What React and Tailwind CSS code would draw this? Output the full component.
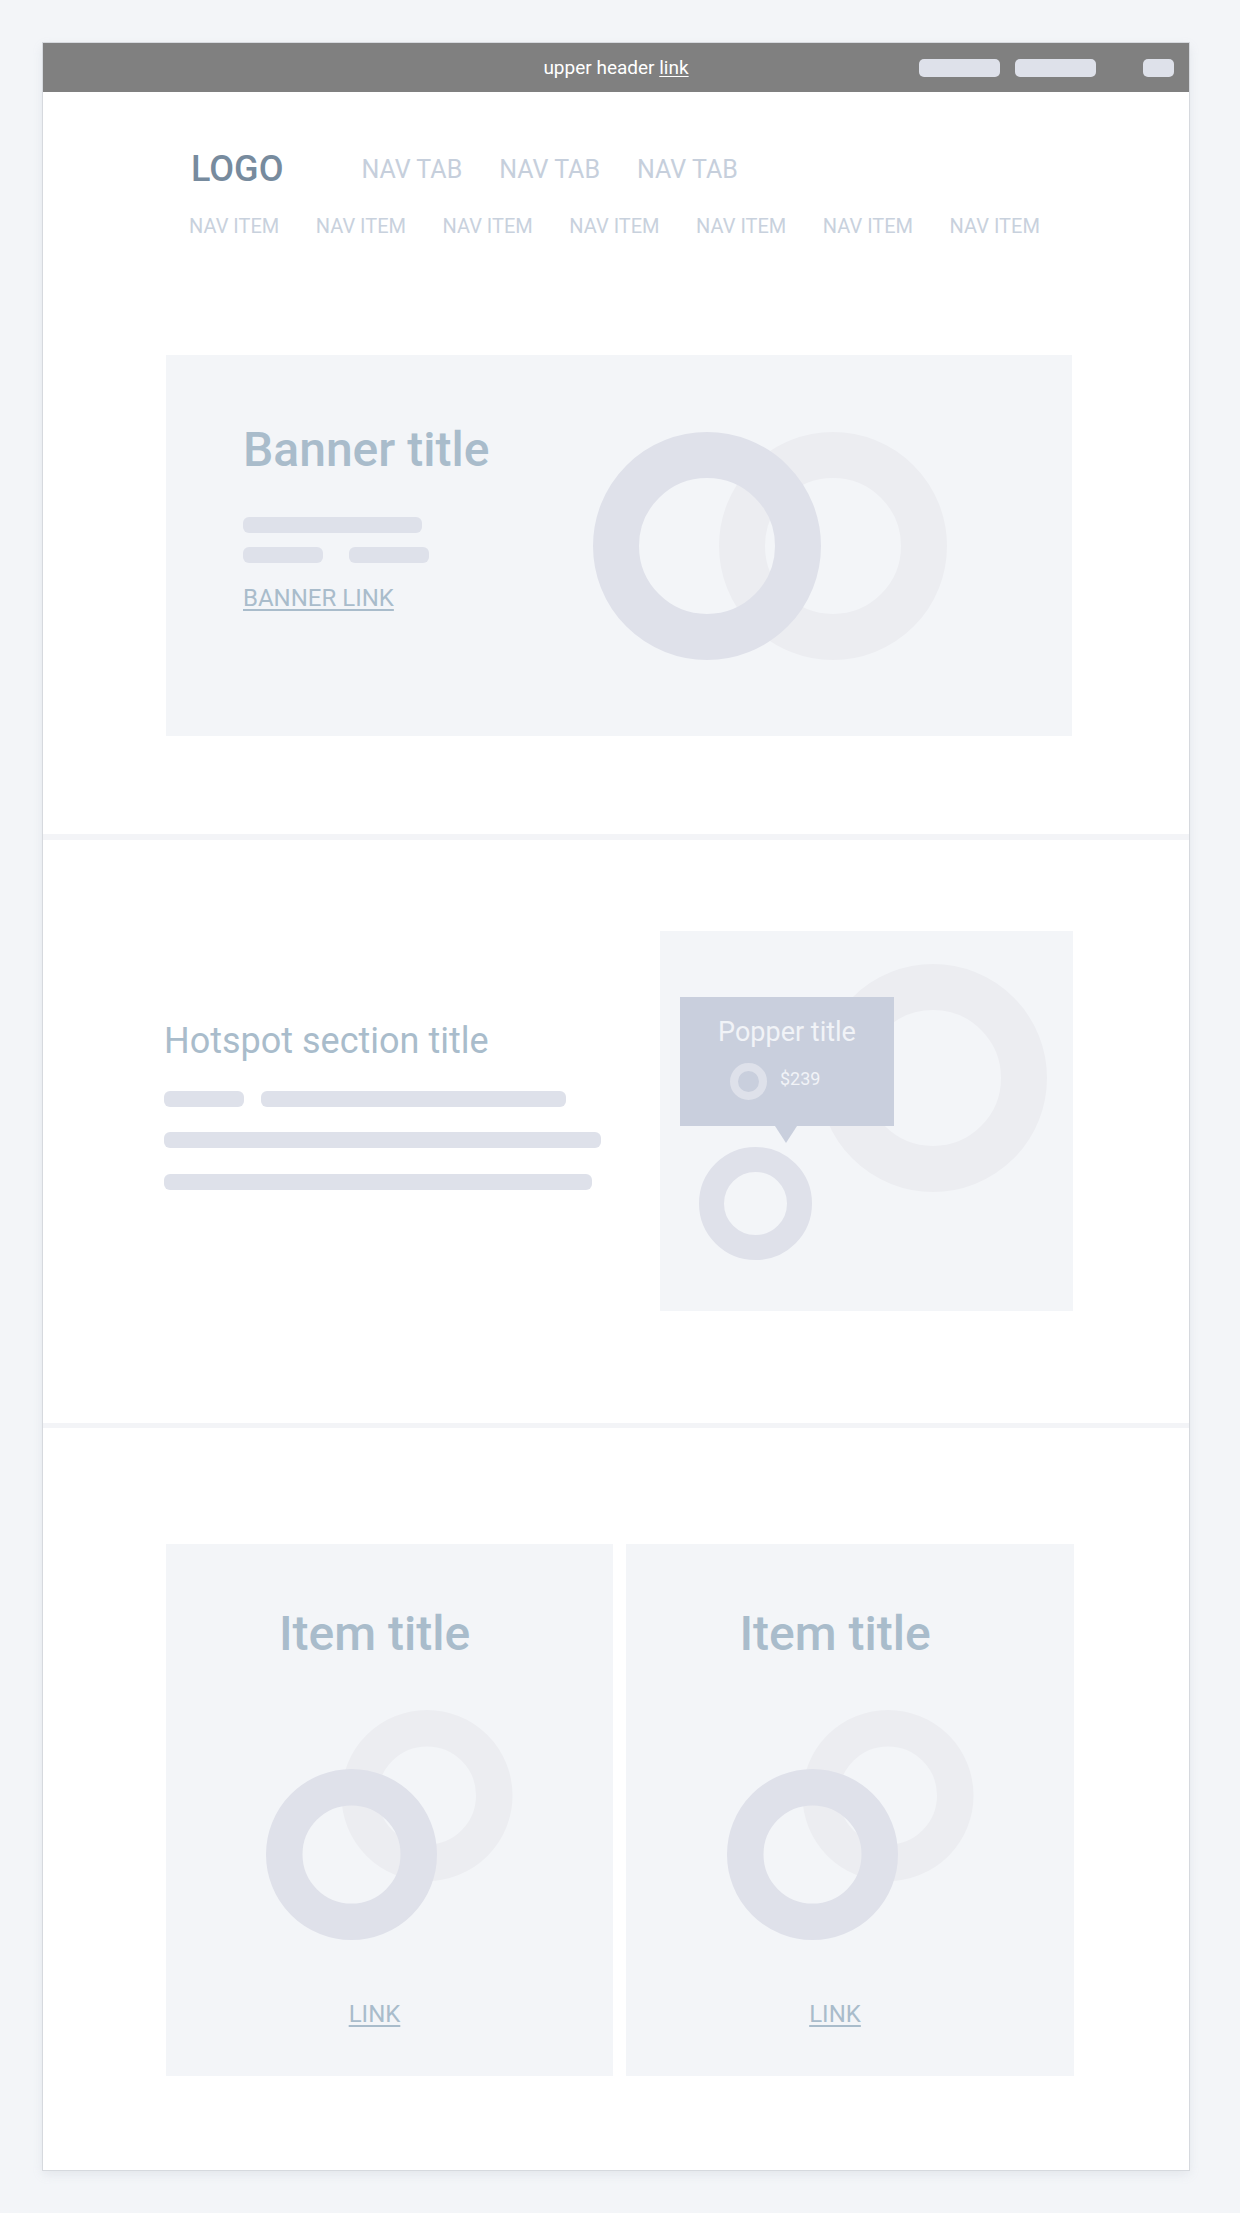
const DARK = "#dfe1ea";
const LIGHT = "#ecedf1";

function Bar({ w }) {
  return <div className={`h-4 rounded-[6px] bg-[#dee1ea] ${w}`} />;
}

function BannerRings() {
  return (
    <svg width="354" height="228" viewBox="0 0 354 228" className="shrink-0 self-center">
      <circle cx="240" cy="114" r="91" fill="none" stroke={LIGHT} strokeWidth="46" />
      <circle cx="114" cy="114" r="91" fill="none" stroke={DARK} strokeWidth="46" />
    </svg>
  );
}

function ItemRings() {
  return (
    <svg width="247" height="230" viewBox="0 0 247 230" className="mt-[52px]">
      <circle cx="161" cy="85.5" r="67.25" fill="none" stroke={LIGHT} strokeWidth="36.5" />
      <circle cx="85.5" cy="144.5" r="67.25" fill="none" stroke={DARK} strokeWidth="36.5" />
    </svg>
  );
}

function ItemCard({ width }) {
  return (
    <div className={`flex h-[532px] flex-col items-center bg-[#f3f5f8] pt-[66px] ${width}`}>
      <h3 className="mr-[30px] text-[48px] font-medium leading-none text-[#a9bccb]">Item title</h3>
      <ItemRings />
      <a className="mr-[30px] mt-[62px] text-[24px] leading-none text-[#a9bccb] underline underline-offset-[3px]">
        LINK
      </a>
    </div>
  );
}

export default function App() {
  return (
    <div className="min-h-[2213px] bg-[#f3f5f8] pt-[43px] pb-[43px] font-['Roboto',sans-serif]">
      <div className="ml-[43px] w-[1146px] bg-white shadow-[0_0_0_1px_#d6d9de,0_4px_10px_rgba(150,160,175,0.18)]">
        {/* upper header */}
        <div className="grid h-[49px] grid-cols-[1fr_auto_1fr] items-center bg-[#808080]">
          <div />
          <p className="text-[19px] leading-none text-white">
            upper header <span className="underline underline-offset-2">link</span>
          </p>
          <div className="flex items-center justify-end pr-[15px]">
            <span className="h-[18px] w-[81px] rounded-[5px] bg-[#dee1ea]" />
            <span className="ml-[15px] h-[18px] w-[81px] rounded-[5px] bg-[#dee1ea]" />
            <span className="ml-[47px] h-[18px] w-[31px] rounded-[5px] bg-[#dee1ea]" />
          </div>
        </div>

        {/* nav + banner */}
        <section className="h-[742px] pt-[59px]">
          <nav>
            <div className="flex items-start pl-[148px]">
              <span className="text-[36px] font-medium leading-none text-[#778b9e]">LOGO</span>
              <div className="ml-[78px] mt-[6px] flex gap-[37px] text-[25px] leading-none text-[#c6cfdc]">
                <span>NAV TAB</span>
                <span>NAV TAB</span>
                <span>NAV TAB</span>
              </div>
            </div>
            <ul className="mt-[29px] flex gap-[36.5px] pl-[146px] text-[20px] leading-none text-[#c8d1dd]">
              {Array.from({ length: 7 }).map((_, i) => (
                <li key={i}>NAV ITEM</li>
              ))}
            </ul>
          </nav>

          <div className="ml-[123px] mt-[119px] flex h-[381px] w-[906px] bg-[#f3f5f8] pl-[77px]">
            <div className="w-[350px] pt-[71px]">
              <h1 className="text-[48px] font-medium leading-none text-[#a9bccb]">Banner title</h1>
              <Bar w="mt-[43px] w-[179px]" />
              <div className="mt-[14px] flex gap-[26px]">
                <Bar w="w-[80px]" />
                <Bar w="w-[80px]" />
              </div>
              <a className="mt-[23px] inline-block text-[24px] leading-none text-[#a9bccb] underline underline-offset-[3px]">
                BANNER LINK
              </a>
            </div>
            <BannerRings />
          </div>
        </section>

        <div className="h-[6px] bg-[#f3f4f7]" />

        {/* hotspot */}
        <section className="flex h-[583px] pl-[121px] pt-[91px]">
          <div className="w-[496px] pt-[92px]">
            <h2 className="text-[36px] leading-none text-[#a9bccb]">Hotspot section title</h2>
            <div className="mt-[32px] flex gap-[17px]">
              <Bar w="w-[80px]" />
              <Bar w="w-[305px]" />
            </div>
            <Bar w="mt-[25px] w-[437px]" />
            <Bar w="mt-[26px] w-[428px]" />
          </div>

          <div className="relative h-[380px] w-[413px] bg-[#f3f5f8]">
            <svg width="413" height="380" viewBox="0 0 413 380" className="absolute inset-0">
              <circle cx="273" cy="147" r="91" fill="none" stroke={LIGHT} strokeWidth="46" />
              <circle cx="95.5" cy="272.5" r="44" fill="none" stroke={DARK} strokeWidth="25" />
            </svg>
            <div className="absolute left-[20px] top-[66px] h-[129px] w-[214px] bg-[#c9cfdd] pt-[22px]">
              <p className="text-center text-[27px] leading-none text-[#f1f3f7]">Popper title</p>
              <div className="mt-[17px] flex items-center pl-[50px]">
                <span className="h-[37px] w-[37px] rounded-full border-[8px] border-[#dee1ea]" />
                <span className="mb-[6px] ml-[13px] text-[18px] leading-none text-[#f1f3f7]">$239</span>
              </div>
              <span className="absolute left-[95px] top-full h-0 w-0 border-x-[11px] border-t-[17px] border-x-transparent border-t-[#c9cfdd]" />
            </div>
          </div>
        </section>

        <div className="h-[5px] bg-[#f3f4f7]" />

        {/* items */}
        <section className="flex h-[742px] gap-[13px] pl-[123px] pt-[116px]">
          <ItemCard width="w-[447px]" />
          <ItemCard width="w-[448px]" />
        </section>
      </div>
    </div>
  );
}
